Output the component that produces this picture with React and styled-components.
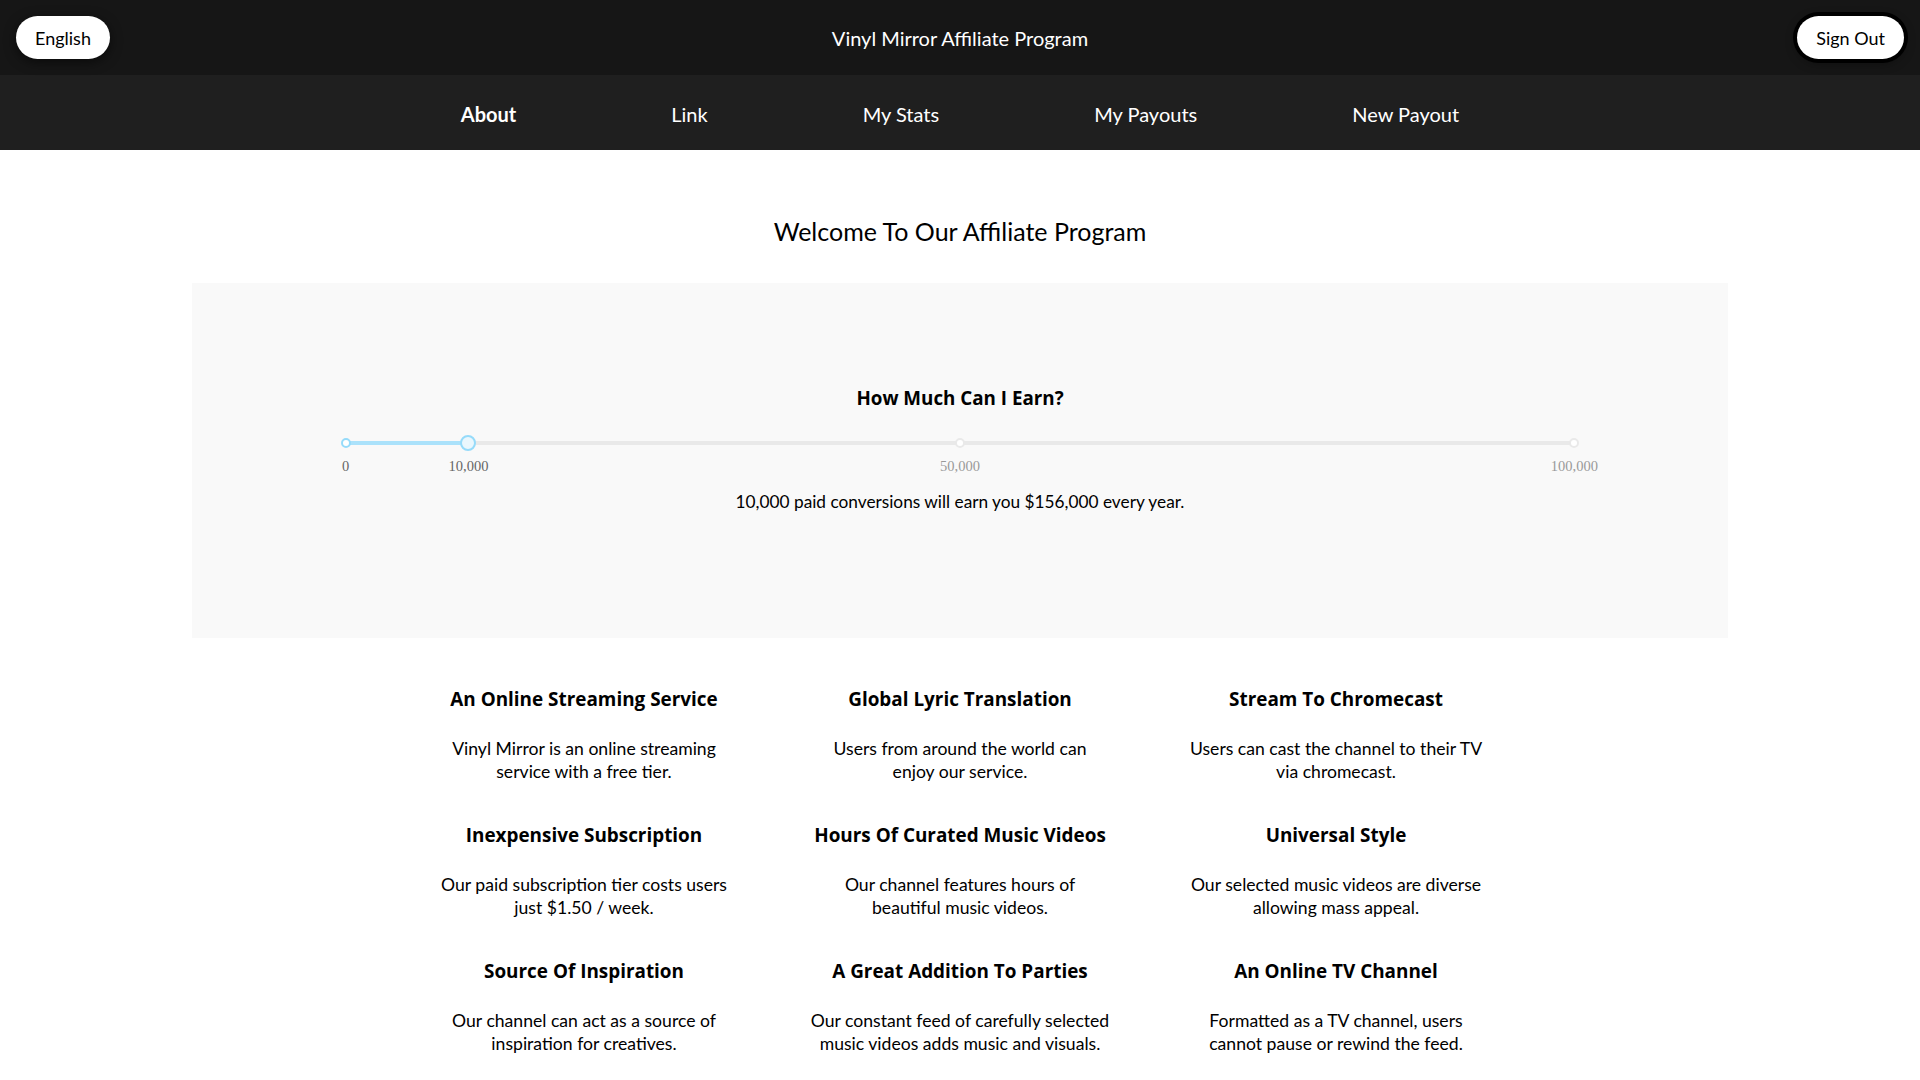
import React from "react";
import styled, { createGlobalStyle } from "styled-components";

const GlobalStyle = createGlobalStyle`
  html, body { margin: 0; padding: 0; background: #ffffff; }
  body { font-family: Lato, "Open Sans", "Liberation Sans", sans-serif; color: #000; }
  * { box-sizing: border-box; }
`;

const TopBar = styled.header`
  height: 75px;
  background: #161616;
  display: grid;
  grid-template-columns: 1fr auto 1fr;
  align-items: center;
  padding: 0 16px;
`;

const SiteTitle = styled.div`
  color: #fff;
  font-size: 20px;
  line-height: 26px;
  text-align: center;
`;

const PillButton = styled.button`
  justify-self: ${(p) => (p.$end ? "end" : "start")};
  height: 43px;
  padding: 0 19px;
  border: none;
  border-radius: 22px;
  background: #fff;
  color: #000;
  font-family: inherit;
  font-size: 18px;
  cursor: pointer;
  box-shadow: ${(p) =>
    p.$focused
      ? "0 0 0 4px #000, 0 3px 12px rgba(0,0,0,0.45)"
      : "0 3px 12px rgba(0,0,0,0.55)"};
`;

const NavBar = styled.nav`
  height: 75px;
  background: #1f1f1f;
  display: flex;
  justify-content: center;
  align-items: center;
  gap: 155px;
  padding-top: 2px;
`;

const NavItem = styled.a`
  color: #fff;
  font-size: 20px;
  line-height: 26px;
  font-weight: ${(p) => (p.$active ? 700 : 400)};
  text-decoration: none;
  cursor: pointer;
`;

const Main = styled.main`
  display: flex;
  flex-direction: column;
  align-items: center;
  padding-top: 65px;
`;

const PageTitle = styled.h1`
  margin: 0;
  font-size: 25px;
  line-height: 32px;
  font-weight: 400;
  text-align: center;
`;

const EarnPanel = styled.section`
  width: 80%;
  height: 355px;
  margin-top: 36px;
  background: #f9f9f9;
  padding-top: 102px;
  display: flex;
  flex-direction: column;
  align-items: center;
`;

const PanelHeading = styled.h2`
  margin: 0;
  font-family: "Open Sans", Lato, sans-serif;
  font-size: 18.8px;
  line-height: 26px;
  font-weight: 700;
`;

const SliderArea = styled.div`
  position: relative;
  width: 80%;
  height: 38px;
  margin-top: 25px;
`;

const Rail = styled.div`
  position: absolute;
  left: 0;
  right: 0;
  top: 5px;
  height: 4px;
  border-radius: 2px;
  background: #e9e9e9;
`;

const Track = styled.div`
  position: absolute;
  left: 0;
  top: 5px;
  height: 4px;
  border-radius: 2px;
  background: #abe2fb;
`;

const Dot = styled.span`
  position: absolute;
  top: 2px;
  width: 10px;
  height: 10px;
  margin-left: -5px;
  border-radius: 50%;
  background: #fff;
  border: 2px solid ${(p) => (p.$active ? "#96dbfa" : "#e9e9e9")};
`;

const Handle = styled.span`
  position: absolute;
  top: -1px;
  width: 16px;
  height: 16px;
  margin-left: -8px;
  border-radius: 50%;
  background: #eaf7fd;
  border: 2px solid #96dbfa;
`;

const MarkLabel = styled.span`
  position: absolute;
  top: 22px;
  transform: translateX(-50%);
  font-family: "Liberation Serif", serif;
  font-size: 14.5px;
  line-height: 16px;
  color: ${(p) => (p.$active ? "#666" : "#999")};
  white-space: nowrap;
`;

const ResultText = styled.p`
  margin: 16px 0 0;
  font-size: 17.25px;
  line-height: 24px;
`;

const FeatureGrid = styled.div`
  display: grid;
  grid-template-columns: repeat(3, 300px);
  column-gap: 76px;
  row-gap: 39px;
  margin-top: 49px;
  padding-bottom: 40px;
`;

const Feature = styled.div`
  text-align: center;
`;

const FeatureTitle = styled.h3`
  margin: 0 0 26px;
  font-family: "Open Sans", Lato, sans-serif;
  font-size: 18.9px;
  line-height: 24px;
  font-weight: 700;
  white-space: nowrap;
`;

const FeatureText = styled.p`
  margin: 0;
  font-size: 17.6px;
  line-height: 23.4px;
`;

const FeatureLine = styled.span`
  display: block;
  white-space: nowrap;
`;

const features = [
  ["An Online Streaming Service", ["Vinyl Mirror is an online streaming", "service with a free tier."]],
  ["Global Lyric Translation", ["Users from around the world can", "enjoy our service."]],
  ["Stream To Chromecast", ["Users can cast the channel to their TV", "via chromecast."]],
  ["Inexpensive Subscription", ["Our paid subscription tier costs users", "just $1.50 / week."]],
  ["Hours Of Curated Music Videos", ["Our channel features hours of", "beautiful music videos."]],
  ["Universal Style", ["Our selected music videos are diverse", "allowing mass appeal."]],
  ["Source Of Inspiration", ["Our channel can act as a source of", "inspiration for creatives."]],
  ["A Great Addition To Parties", ["Our constant feed of carefully selected", "music videos adds music and visuals."]],
  ["An Online TV Channel", ["Formatted as a TV channel, users", "cannot pause or rewind the feed."]],
];

const navItems = ["About", "Link", "My Stats", "My Payouts", "New Payout"];
const marks = [0, 10000, 50000, 100000];
const MAX = 100000;

const fmt = (n) => n.toLocaleString("en-US");

function EarningsSlider({ value }) {
  const pct = (v) => `${(v / MAX) * 100}%`;
  return (
    <SliderArea>
      <Rail />
      <Track style={{ width: pct(value) }} />
      {marks.map((m) => (
        <Dot key={m} $active={m <= value} style={{ left: pct(m) }} />
      ))}
      <Handle style={{ left: pct(value) }} />
      {marks.map((m) => (
        <MarkLabel key={m} $active={m <= value} style={{ left: pct(m) }}>
          {fmt(m)}
        </MarkLabel>
      ))}
    </SliderArea>
  );
}

export default function App() {
  const value = 10000;
  return (
    <>
      <GlobalStyle />
      <TopBar>
        <PillButton>English</PillButton>
        <SiteTitle>Vinyl Mirror Affiliate Program</SiteTitle>
        <PillButton $end $focused>Sign Out</PillButton>
      </TopBar>
      <NavBar>
        {navItems.map((n, i) => (
          <NavItem key={n} $active={i === 0}>{n}</NavItem>
        ))}
      </NavBar>
      <Main>
        <PageTitle>Welcome To Our Affiliate Program</PageTitle>
        <EarnPanel>
          <PanelHeading>How Much Can I Earn?</PanelHeading>
          <EarningsSlider value={value} />
          <ResultText>
            {fmt(value)} paid conversions will earn you ${fmt(value * 15.6)} every year.
          </ResultText>
        </EarnPanel>
        <FeatureGrid>
          {features.map(([t, lines]) => (
            <Feature key={t}>
              <FeatureTitle>{t}</FeatureTitle>
              <FeatureText>
                {lines.map((l) => (
                  <FeatureLine key={l}>{l}</FeatureLine>
                ))}
              </FeatureText>
            </Feature>
          ))}
        </FeatureGrid>
      </Main>
    </>
  );
}
